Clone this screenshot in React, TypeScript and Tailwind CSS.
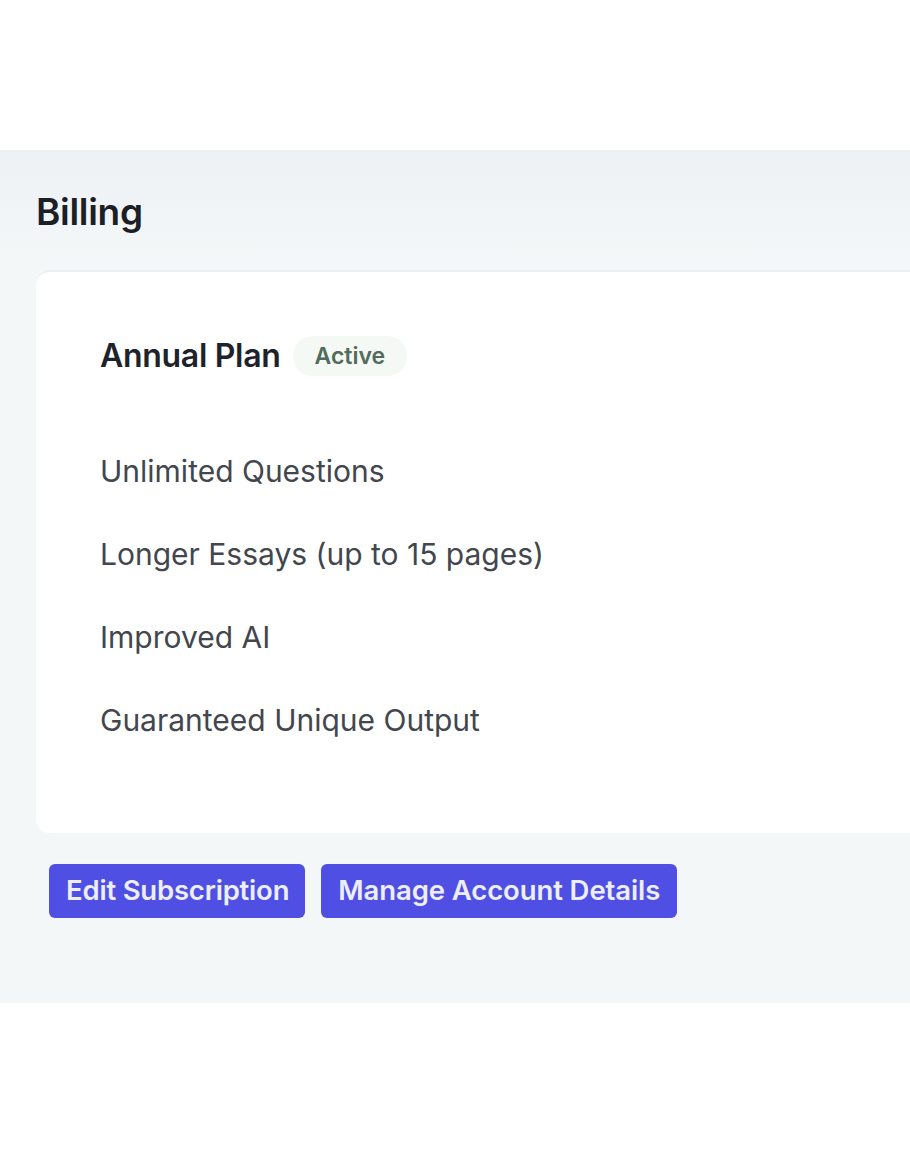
import React from "react";

export default function App() {
  const features = [
    "Unlimited Questions",
    "Longer Essays (up to 15 pages)",
    "Improved AI",
    "Guaranteed Unique Output",
  ];
  return (
    <div className="w-[910px] h-[1155px] bg-white overflow-hidden" style={{ fontFamily: "Inter, 'Liberation Sans', sans-serif" }}>
      <div className="h-[150px]" />
      <div className="h-[853px] bg-[linear-gradient(to_bottom,#eef1f4,#f4f7f8_110px,#f4f7f8)] pl-[36px] overflow-hidden">
        <div className="pt-[40px] h-[120px]">
          <h1 className="text-[37px] leading-[44px] font-semibold text-[#1c1f26] tracking-[-0.3px]">Billing</h1>
        </div>
        <div className="w-[900px] h-[563px] bg-white rounded-l-[14px] border-t-2 border-[#eceff1] pl-[64px] pt-[62px]">
          <div className="flex items-center h-[44px]">
            <span className="text-[32px] font-semibold text-[#1e222b] tracking-[-0.3px]">Annual Plan</span>
            <span className="ml-[12px] px-[22px] h-[40px] flex items-center rounded-full bg-[#f4f9f5] text-[23px] font-semibold text-[#526b5b]">Active</span>
          </div>
          <div className="mt-[75px] flex flex-col gap-[47px]">
            {features.map((f) => (
              <div key={f} className="text-[30px] leading-[36px] text-[#43464d]">{f}</div>
            ))}
          </div>
        </div>
        <div className="mt-[31px] ml-[13px] flex gap-[16px]">
          <button className="h-[54px] pl-[17px] pr-[16px] rounded-[6px] bg-[#4f4fe3] text-[27.5px] font-semibold text-[#eceeff] tracking-[-0.2px]">Edit Subscription</button>
          <button className="h-[54px] pl-[17px] pr-[17px] rounded-[6px] bg-[#4f4fe3] text-[27.5px] font-semibold text-[#eceeff] tracking-[-0.1px]">Manage Account Details</button>
        </div>
      </div>
    </div>
  );
}
